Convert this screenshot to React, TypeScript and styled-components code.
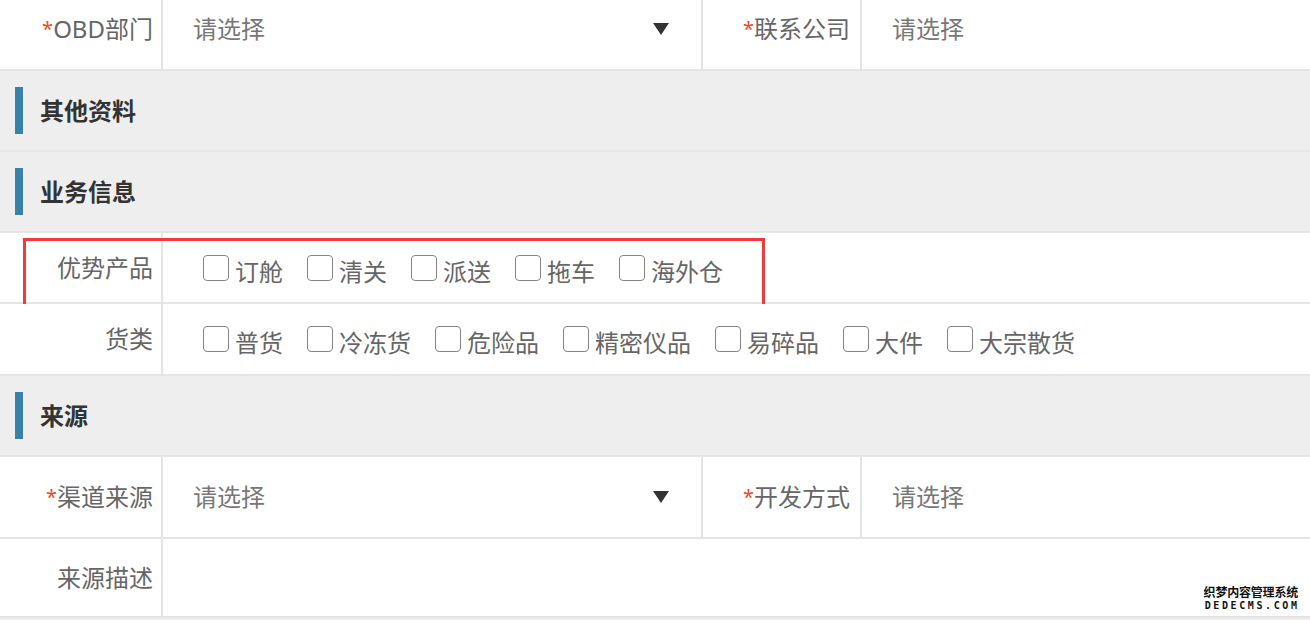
import React from "react";
import styled, { createGlobalStyle } from "styled-components";

const Global = createGlobalStyle`
  html, body { margin: 0; padding: 0; background: #eeeeee; overflow: hidden; }
  body { width: 1310px; height: 620px; font-family: "Noto Sans", "Noto Sans CJK SC", sans-serif; }
  * { box-sizing: border-box; }
`;

const Page = styled.div`
  position: relative;
  width: 1310px;
  height: 620px;
  overflow: hidden;
`;

const Form = styled.div`
  margin-top: -11px;
  background: #ffffff;
`;

const Row = styled.div<{ $h: number }>`
  position: relative;
  display: flex;
  height: ${(p) => p.$h}px;
  border-bottom: 2px solid #e4e4e4;
  background: #ffffff;
`;

const Label = styled.div<{ $w: number; $pr: number }>`
  flex: none;
  width: ${(p) => p.$w}px;
  padding-right: ${(p) => p.$pr}px;
  border-right: 2px solid #e4e4e4;
  display: flex;
  align-items: center;
  justify-content: flex-end;
  color: #666666;
  font-size: 24px;
  line-height: 1;
  white-space: nowrap;
`;

const Star = styled.span`
  color: #f5451f;
  font-size: 20px;
  align-self: flex-start;
  margin-top: 2px;
`;

const StarWrap = styled.span`
  display: inline-flex;
  align-items: flex-start;
`;

const SelectCell = styled.div<{ $w?: number; $sep?: boolean }>`
  ${(p) => (p.$w ? `flex: none; width: ${p.$w}px;` : "flex: 1;")}
  ${(p) => (p.$sep ? "border-right: 2px solid #e4e4e4;" : "")}
  display: flex;
  align-items: center;
  justify-content: space-between;
  padding-left: 30px;
  padding-right: 32px;
  color: #777777;
  font-size: 24px;
  line-height: 1;
`;

const Caret = styled.span`
  width: 0;
  height: 0;
  border-left: 8px solid transparent;
  border-right: 8px solid transparent;
  border-top: 12px solid #333333;
`;

const EmptyCell = styled.div`
  flex: 1;
`;

const CheckGroup = styled.div`
  flex: 1;
  display: flex;
  align-items: center;
  gap: 24px;
  padding-left: 40px;
`;

const CheckItem = styled.label`
  display: flex;
  align-items: center;
  gap: 6px;
  color: #666666;
  font-size: 24px;
  line-height: 1;
`;

const Box = styled.span`
  display: block;
  width: 26px;
  height: 26px;
  border: 1px solid #858585;
  border-radius: 4px;
  background: #ffffff;
`;

const CheckText = styled.span`
  padding-top: 8px;
  white-space: nowrap;
`;

const Header = styled.div<{ $h: number }>`
  display: flex;
  align-items: center;
  gap: 17px;
  height: ${(p) => p.$h}px;
  padding-left: 15px;
  background: #eeeeee;
  border-bottom: 2px solid #e6e6e6;
  color: #333333;
  font-size: 24px;
  font-weight: 700;
  line-height: 1;
`;

const Bar = styled.span`
  width: 8px;
  height: 47px;
  background: #3881a9;
`;

const Highlight = styled.div`
  position: absolute;
  left: 23px;
  top: 5px;
  width: 742px;
  height: 71px;
  border: 3px solid #f2393b;
  pointer-events: none;
`;

const Watermark = styled.div`
  position: absolute;
  right: 12px;
  bottom: 9px;
  display: flex;
  flex-direction: column;
  align-items: center;
  color: #111;
  font-family: "Noto Sans CJK SC", sans-serif;
  font-weight: 700;
  line-height: 1;
  text-shadow: 1px 0 #fff, -1px 0 #fff, 0 1px #fff, 0 -1px #fff, 1px 1px #ddd;
`;

const WmTop = styled.span`
  font-size: 12px;
  letter-spacing: -0.2px;
`;

const WmBottom = styled.span`
  margin-top: 3px;
  font-family: "DejaVu Sans Mono", monospace;
  font-size: 10px;
  letter-spacing: 2.6px;
  margin-right: -2.6px;
`;

function Req({ children }: { children: React.ReactNode }) {
  return (
    <StarWrap>
      <Star>*</Star>
      {children}
    </StarWrap>
  );
}

function Checks({ items }: { items: string[] }) {
  return (
    <CheckGroup>
      {items.map((t) => (
        <CheckItem key={t}>
          <Box />
          <CheckText>{t}</CheckText>
        </CheckItem>
      ))}
    </CheckGroup>
  );
}

export default function App() {
  return (
    <Page>
      <Global />
      <Form>
        <Row $h={82}>
          <Label $w={163} $pr={8}>
            <Req>OBD部门</Req>
          </Label>
          <SelectCell $w={540} $sep>
            请选择
            <Caret />
          </SelectCell>
          <Label $w={159} $pr={10}>
            <Req>联系公司</Req>
          </Label>
          <SelectCell>请选择</SelectCell>
        </Row>
        <Header $h={81}>
          <Bar />
          其他资料
        </Header>
        <Header $h={81}>
          <Bar />
          业务信息
        </Header>
        <Row $h={71}>
          <Label $w={163} $pr={8}>优势产品</Label>
          <Checks items={["订舱", "清关", "派送", "拖车", "海外仓"]} />
          <Highlight />
        </Row>
        <Row $h={72}>
          <Label $w={163} $pr={8}>货类</Label>
          <Checks items={["普货", "冷冻货", "危险品", "精密仪品", "易碎品", "大件", "大宗散货"]} />
        </Row>
        <Header $h={81}>
          <Bar />
          来源
        </Header>
        <Row $h={82}>
          <Label $w={163} $pr={8}>
            <Req>渠道来源</Req>
          </Label>
          <SelectCell $w={540} $sep>
            请选择
            <Caret />
          </SelectCell>
          <Label $w={159} $pr={10}>
            <Req>开发方式</Req>
          </Label>
          <SelectCell>请选择</SelectCell>
        </Row>
        <Row $h={79}>
          <Label $w={163} $pr={8}>来源描述</Label>
          <EmptyCell />
        </Row>
      </Form>
      <Watermark>
        <WmTop>织梦内容管理系统</WmTop>
        <WmBottom>DEDECMS.COM</WmBottom>
      </Watermark>
    </Page>
  );
}
